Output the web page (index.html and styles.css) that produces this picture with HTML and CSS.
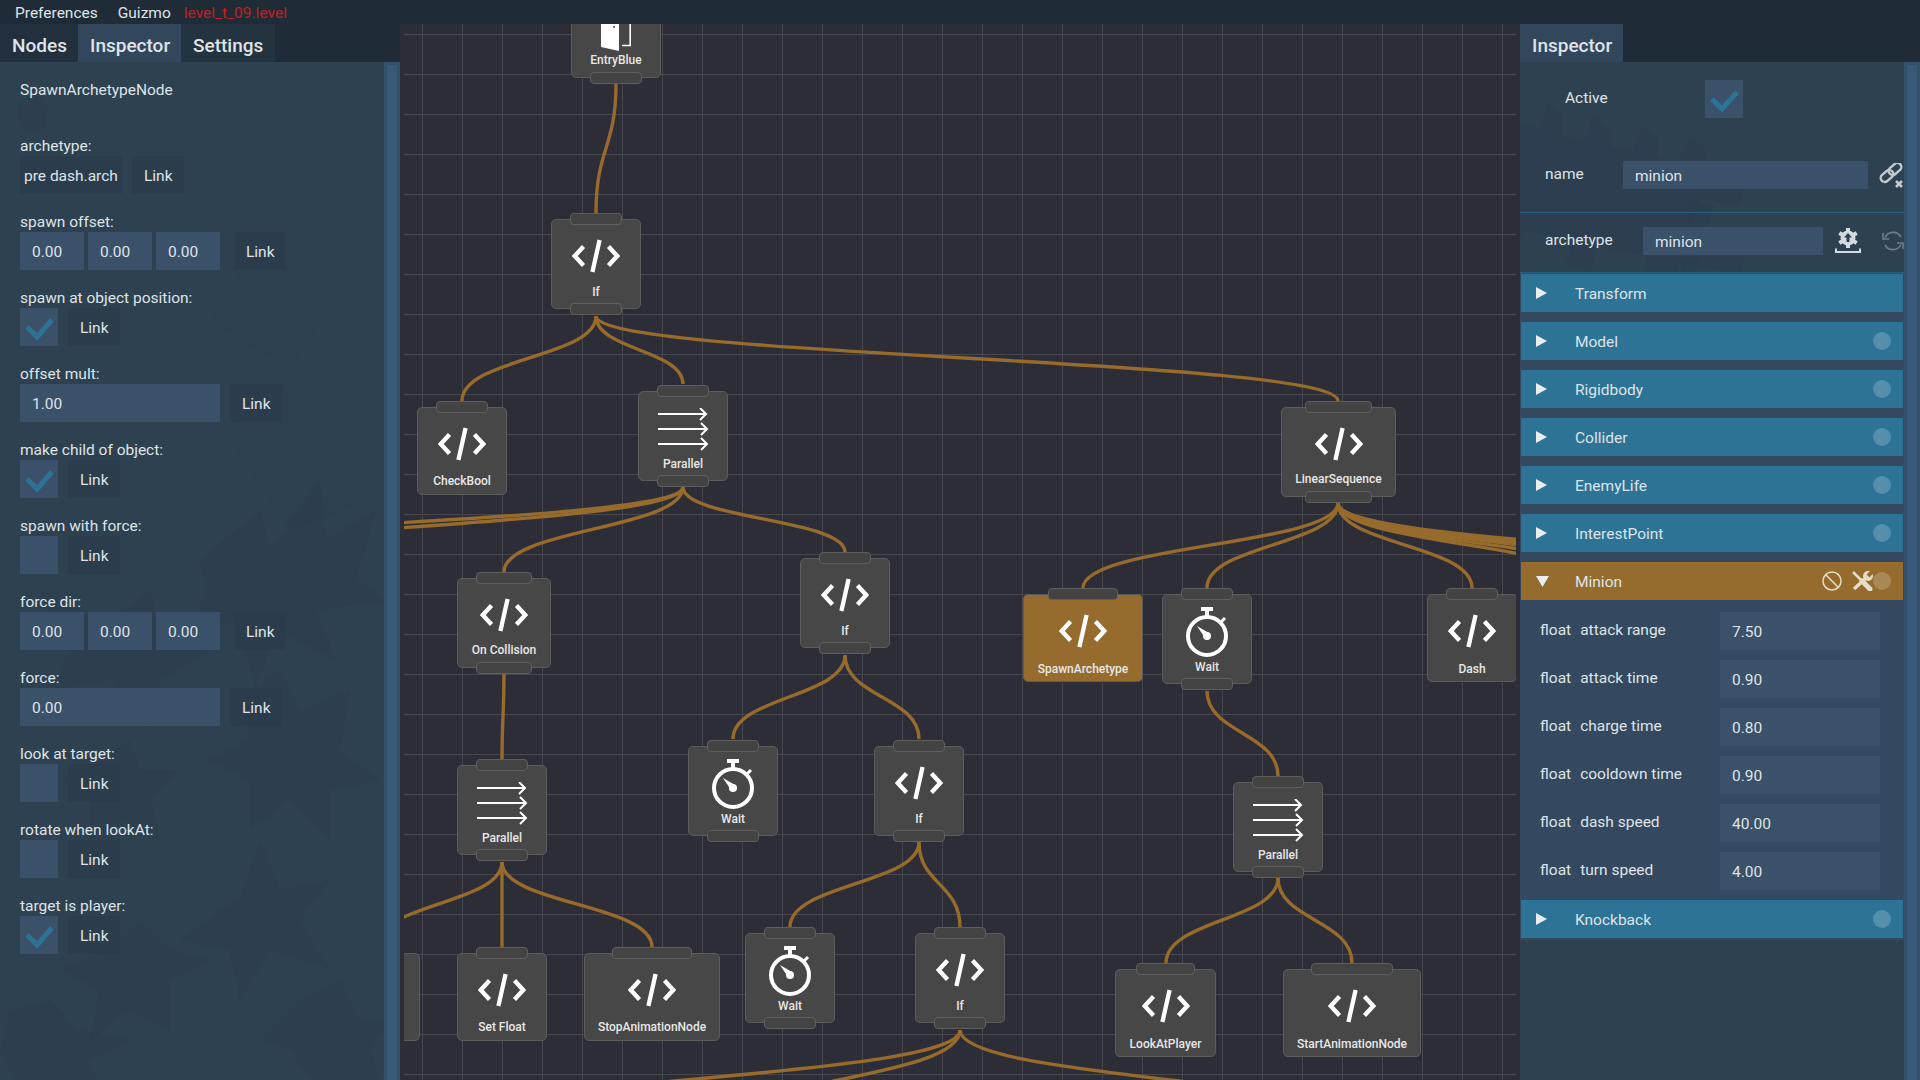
FILE: index.html
```html
<!DOCTYPE html>
<html lang="en">
<head>
  <meta charset="UTF-8">
  <title>Behaviour editor</title>
  <link rel="stylesheet" href="styles.css">
</head>
<body>
  <!-- shared node and checkbox icons -->
  <svg class="defs" width="0" height="0">
    <symbol id="ico-code" viewBox="0 0 48 34">
      <path d="M11.5 7.500 2.800 17l8.700 9.500M36.500 7.500l8.700 9.500-8.700 9.500M27.600 1l-7.200 32" fill="none" stroke="#fff" stroke-width="4.300"/>
    </symbol>
    <symbol id="ico-wait" viewBox="0 0 44 50">
      <path d="M16 0h12v4H16zM20 4h4v6h-4z" fill="#fff"/>
      <circle cx="22" cy="29" r="19" fill="none" stroke="#fff" stroke-width="4"/>
      <path d="M35 16l5-5" stroke="#fff" stroke-width="3"/>
      <path d="M12 19l12 7-4 5z" fill="#fff"/>
      <circle cx="22" cy="29" r="4" fill="#fff"/>
    </symbol>
    <symbol id="ico-parallel" viewBox="0 0 52 44">
      <path d="M1 6h48M43 0l6 6-6 6M1 21h49M44 15l6 6-6 6M1 36h49M44 30l6 6-6 6" fill="none" stroke="#fff" stroke-width="2"/>
    </symbol>
    <symbol id="ico-door" viewBox="0 0 30 38">
      <path d="M0 0h18v38L0 34z" fill="#fff"/>
      <circle cx="13" cy="14" r="1" fill="#444"/>
      <path d="M21 32.500h8.200V0" fill="none" stroke="#fff" stroke-width="1.600"/>
    </symbol>
    <symbol id="ico-check" viewBox="0 0 38 38">
      <path d="M7 19l10 10 15-17" fill="none" stroke="#2c7396" stroke-width="5"/>
    </symbol>
    <symbol id="ico-tri" viewBox="0 0 11 12">
      <path d="M0 0l11 6-11 6z" fill="#e8edf0"/>
    </symbol>
  </svg>

  <div class="menu-bar">
    <span class="menu-item">Preferences</span>
    <span class="menu-item">Guizmo</span>
    <span class="menu-file">level_t_09.level</span>
  </div>

  <div class="workspace">
    <!-- left dock -->
    <div class="dock">
      <div class="tabs">
        <div class="tab tab-nodes">Nodes</div>
        <div class="tab tab-active">Inspector</div>
        <div class="tab tab-settings">Settings</div>
      </div>
      <div class="dock-body">
        <svg class="texture" viewBox="0 62 400 1018" width="400" height="1018">
          <g fill="#2a3850" fill-opacity=".24">
            <path d="M20 100l22-6 6 14 -4 20-18 2-8-14z"/>
            <path d="M200 560l60-50 10 40 50-70 6 60 50-30-20 70 30 20-70 10 20 50-60-30-20 60-20-70-50 20 20-50z"/>
            <path d="M40 590l70 30 40-30 10 50 50 10-50 30-10 50-40-50-60 10 20-40z"/>
            <path d="M240 700l40-30 20 40 50-20-10 60 40 30-50 10 0 50-40-40-40 30 0-50-40-20 40-20z"/>
            <path d="M100 760l30-20 10 30 40 0-30 30 10 40-40-20-30 20 0-40-30-20z"/>
            <path d="M240 900l20-60 20 50 50-10-30 40 30 50-60-20-30 50-10-50-50-10 40-30z"/>
            <path d="M110 950l30-30 30 30 40 10-40 20 0 50-40-20-40 30 10-50-40-20z"/>
            <path d="M10 1010l40-10 30 30 50 10-40 20 10 30h-80l-20-40z"/>
            <path d="M300 1000l40-20 20 40 30 0-20 30 10 30h-70l-20-30-30-10z"/>
            <path d="M260 240l70 70-40 60-80-50z" fill-opacity=".1"/>
            <path d="M280 380l90 120-80 30-60-90z" fill-opacity=".1"/>
          </g>
        </svg>
        <div class="fields">
          <div class="node-title">SpawnArchetypeNode</div>

          <div class="field">
            <div class="field-label">archetype:</div>
            <div class="field-row">
              <span class="file-box">pre dash.arch</span>
              <span class="link-btn link-near">Link</span>
            </div>
          </div>

          <div class="field">
            <div class="field-label">spawn offset:</div>
            <div class="field-row">
              <span class="num-box">0.00</span><span class="num-box">0.00</span><span class="num-box">0.00</span>
              <span class="link-btn link-far">Link</span>
            </div>
          </div>

          <div class="field">
            <div class="field-label">spawn at object position:</div>
            <div class="field-row">
              <span class="check-box"><svg><use href="#ico-check"/></svg></span>
              <span class="link-btn link-near">Link</span>
            </div>
          </div>

          <div class="field">
            <div class="field-label">offset mult:</div>
            <div class="field-row">
              <span class="wide-box">1.00</span>
              <span class="link-btn link-near">Link</span>
            </div>
          </div>

          <div class="field">
            <div class="field-label">make child of object:</div>
            <div class="field-row">
              <span class="check-box"><svg><use href="#ico-check"/></svg></span>
              <span class="link-btn link-near">Link</span>
            </div>
          </div>

          <div class="field">
            <div class="field-label">spawn with force:</div>
            <div class="field-row">
              <span class="check-box"></span>
              <span class="link-btn link-near">Link</span>
            </div>
          </div>

          <div class="field">
            <div class="field-label">force dir:</div>
            <div class="field-row">
              <span class="num-box">0.00</span><span class="num-box">0.00</span><span class="num-box">0.00</span>
              <span class="link-btn link-far">Link</span>
            </div>
          </div>

          <div class="field">
            <div class="field-label">force:</div>
            <div class="field-row">
              <span class="wide-box">0.00</span>
              <span class="link-btn link-near">Link</span>
            </div>
          </div>

          <div class="field">
            <div class="field-label">look at target:</div>
            <div class="field-row">
              <span class="check-box"></span>
              <span class="link-btn link-near">Link</span>
            </div>
          </div>

          <div class="field">
            <div class="field-label">rotate when lookAt:</div>
            <div class="field-row">
              <span class="check-box"></span>
              <span class="link-btn link-near">Link</span>
            </div>
          </div>

          <div class="field">
            <div class="field-label">target is player:</div>
            <div class="field-row">
              <span class="check-box"><svg><use href="#ico-check"/></svg></span>
              <span class="link-btn link-near">Link</span>
            </div>
          </div>
        </div>
        <div class="scrollbar"><div class="scroll-thumb"></div></div>
      </div>
    </div>

    <!-- node graph -->
    <div class="graph">
      <div class="graph-inner">
        <svg class="wires" viewBox="404 24 1112 1056" width="1112" height="1056">
          <g fill="none" stroke="#966b2b" stroke-width="3.400">
            <path d="M616 84C616 148 596 148 596 213"/>
            <path d="M596 316C596 358 462 358 462 401"/>
            <path d="M596 316C596 350 683 350 683 384"/>
            <path d="M596 316C596 358 1338 358 1338 401"/>
            <path d="M683 487C683 529 504 529 504 572"/>
            <path d="M683 487C683 519 845 519 845 552"/>
            <path d="M683 487C683 529 -109 529 -109 572"/>
            <path d="M683 487C683 529 82 529 82 572"/>
            <path d="M504 674C504 716 502 716 502 759"/>
            <path d="M845 655C845 697 733 697 733 739"/>
            <path d="M845 655C845 697 919 697 919 739"/>
            <path d="M502 862C502 904 375 904 375 947"/>
            <path d="M502 862V947"/>
            <path d="M502 862C502 904 652 904 652 947"/>
            <path d="M919 842C919 884 790 884 790 927"/>
            <path d="M919 842C919 884 960 884 960 927"/>
            <path d="M960 1030C960 1080 412 1080 412 1130"/>
            <path d="M960 1030C960 1080 718 1080 718 1130"/>
            <path d="M960 1030C960 1080 1380 1080 1380 1130"/>
            <path d="M1338 503C1338 545 1083 545 1083 588"/>
            <path d="M1338 503C1338 545 1207 545 1207 588"/>
            <path d="M1338 503C1338 545 1472 545 1472 588"/>
            <path d="M1338 503C1338 545 1823 545 1823 588"/>
            <path d="M1338 503C1338 545 1760 545 1760 588"/>
            <path d="M1338 503C1338 545 1704 545 1704 588"/>
            <path d="M1338 503C1338 545 1647 545 1647 588"/>
            <path d="M1338 503C1338 545 1600 545 1600 588"/>
            <path d="M1207 691C1207 733 1278 733 1278 776"/>
            <path d="M1278 878C1278 920 1166 920 1166 963"/>
            <path d="M1278 878C1278 920 1352 920 1352 963"/>
          </g>
        </svg>

        <div class="node n-entry">
          <svg class="ico-door"><use href="#ico-door"/></svg>
          <div class="node-name name-door">EntryBlue</div>
          <div class="pin pin-out"></div>
        </div>
        <div class="node n-if-a">
          <div class="pin pin-in"></div>
          <svg class="ico-code"><use href="#ico-code"/></svg>
          <div class="node-name name-if">If</div>
          <div class="pin pin-out"></div>
        </div>
        <div class="node leaf n-checkbool">
          <div class="pin pin-in"></div>
          <svg class="ico-code"><use href="#ico-code"/></svg>
          <div class="node-name">CheckBool</div>
        </div>
        <div class="node n-parallel-a">
          <div class="pin pin-in"></div>
          <svg class="ico-parallel"><use href="#ico-parallel"/></svg>
          <div class="node-name name-parallel">Parallel</div>
          <div class="pin pin-out"></div>
        </div>
        <div class="node n-linear">
          <div class="pin pin-in"></div>
          <svg class="ico-code"><use href="#ico-code"/></svg>
          <div class="node-name">LinearSequence</div>
          <div class="pin pin-out"></div>
        </div>
        <div class="node n-collision">
          <div class="pin pin-in"></div>
          <svg class="ico-code"><use href="#ico-code"/></svg>
          <div class="node-name">On Collision</div>
          <div class="pin pin-out"></div>
        </div>
        <div class="node n-if-b">
          <div class="pin pin-in"></div>
          <svg class="ico-code"><use href="#ico-code"/></svg>
          <div class="node-name name-if">If</div>
          <div class="pin pin-out"></div>
        </div>
        <div class="node leaf selected n-spawn">
          <div class="pin pin-in"></div>
          <svg class="ico-code"><use href="#ico-code"/></svg>
          <div class="node-name">SpawnArchetype</div>
        </div>
        <div class="node n-wait-a">
          <div class="pin pin-in"></div>
          <svg class="ico-wait"><use href="#ico-wait"/></svg>
          <div class="node-name name-wait">Wait</div>
          <div class="pin pin-out"></div>
        </div>
        <div class="node leaf n-dash">
          <div class="pin pin-in"></div>
          <svg class="ico-code"><use href="#ico-code"/></svg>
          <div class="node-name">Dash</div>
        </div>
        <div class="node n-parallel-b">
          <div class="pin pin-in"></div>
          <svg class="ico-parallel"><use href="#ico-parallel"/></svg>
          <div class="node-name name-parallel">Parallel</div>
          <div class="pin pin-out"></div>
        </div>
        <div class="node n-wait-b">
          <div class="pin pin-in"></div>
          <svg class="ico-wait"><use href="#ico-wait"/></svg>
          <div class="node-name name-wait">Wait</div>
          <div class="pin pin-out"></div>
        </div>
        <div class="node n-if-c">
          <div class="pin pin-in"></div>
          <svg class="ico-code"><use href="#ico-code"/></svg>
          <div class="node-name name-if">If</div>
          <div class="pin pin-out"></div>
        </div>
        <div class="node n-parallel-c">
          <div class="pin pin-in"></div>
          <svg class="ico-parallel"><use href="#ico-parallel"/></svg>
          <div class="node-name name-parallel">Parallel</div>
          <div class="pin pin-out"></div>
        </div>
        <div class="node leaf n-stub">
          <div class="pin pin-in"></div>
        </div>
        <div class="node leaf n-setfloat">
          <div class="pin pin-in"></div>
          <svg class="ico-code"><use href="#ico-code"/></svg>
          <div class="node-name">Set Float</div>
        </div>
        <div class="node leaf n-stop">
          <div class="pin pin-in"></div>
          <svg class="ico-code"><use href="#ico-code"/></svg>
          <div class="node-name">StopAnimationNode</div>
        </div>
        <div class="node n-wait-c">
          <div class="pin pin-in"></div>
          <svg class="ico-wait"><use href="#ico-wait"/></svg>
          <div class="node-name name-wait">Wait</div>
          <div class="pin pin-out"></div>
        </div>
        <div class="node n-if-d">
          <div class="pin pin-in"></div>
          <svg class="ico-code"><use href="#ico-code"/></svg>
          <div class="node-name name-if">If</div>
          <div class="pin pin-out"></div>
        </div>
        <div class="node leaf n-lookat">
          <div class="pin pin-in"></div>
          <svg class="ico-code"><use href="#ico-code"/></svg>
          <div class="node-name">LookAtPlayer</div>
        </div>
        <div class="node leaf n-startanim">
          <div class="pin pin-in"></div>
          <svg class="ico-code"><use href="#ico-code"/></svg>
          <div class="node-name">StartAnimationNode</div>
        </div>
      </div>
    </div>

    <!-- right dock -->
    <div class="dock">
      <div class="tabs">
        <div class="tab tab-active">Inspector</div>
      </div>
      <div class="dock-body">
        <svg class="texture" viewBox="1520 62 400 1018" width="400" height="1018">
          <g fill="#2a3a50" fill-opacity=".4">
            <path d="M1520 122l20 6 8-24 14 12 0 20 22 4 10-24 18 12 0 20 20 4 10-26 16 14 0 18 20 4 12-26 16 14 0 22 40 8-6 26-40-8-14 40 60 12-6 24-60-12-12 30-30-8 10-28-50-10-8 26-24-8 8-24-50-10-6 22-20-6z"/>
            <path d="M1690 200l24 6-40 140 60 12-30 100-26-8 20-70-30-8z" fill-opacity=".22"/>
          </g>
        </svg>
        <div class="props">
          <div class="active-row">
            <span class="active-label">Active</span>
            <span class="check-box"><svg><use href="#ico-check"/></svg></span>
          </div>
          <div class="name-row">
            <span class="prop-label label-name">name</span>
            <span class="text-box box-name">minion</span>
            <svg class="ico-unlink" viewBox="0 0 25 25" width="25" height="25">
              <g fill="none" stroke="#c2c9cf" stroke-width="2.400">
                <rect x="9" y="2" width="14" height="8" rx="4" transform="rotate(-40 16 6)"/>
                <rect x="1" y="9" width="14" height="8" rx="4" transform="rotate(-40 8 13)"/>
              </g>
              <path d="M17 18l6 6m0-6l-6 6" stroke="#c2c9cf" stroke-width="2.600"/>
            </svg>
          </div>
          <div class="arch-row">
            <span class="prop-label label-arch">archetype</span>
            <span class="text-box box-arch">minion</span>
            <svg class="ico-gear" viewBox="0 0 26 26" width="26" height="26">
              <circle cx="13" cy="10" r="7.500" fill="#d5dade"/>
              <path d="M13 10V0M13 10l8.700-5M13 10l8.700 5M13 10v10M13 10l-8.700 5M13 10L4.300 5" stroke="#d5dade" stroke-width="4"/>
              <path d="M13 5l-4 4.500h2.500V14h3V9.500H17z" fill="#2f4354"/>
              <path d="M1 20.500v3.500h24v-3.500" fill="none" stroke="#d5dade" stroke-width="2"/>
            </svg>
            <svg class="ico-sync" viewBox="0 0 22 22" width="22" height="22">
              <path d="M3 7.500A9 9 0 0 1 19 7M19 14.500A9 9 0 0 1 3 15" fill="none" stroke="#6d7d8b" stroke-width="1.600"/>
              <path d="M1 3v6h6M21 19v-6h-6" fill="none" stroke="#6d7d8b" stroke-width="1.600"/>
            </svg>
          </div>

          <div class="comp-list">
            <div class="comp-head no-dot">
              <svg class="tri"><use href="#ico-tri"/></svg><span class="comp-name">Transform</span>
            </div>
            <div class="comp-head">
              <svg class="tri"><use href="#ico-tri"/></svg><span class="comp-name">Model</span><span class="dot"></span>
            </div>
            <div class="comp-head">
              <svg class="tri"><use href="#ico-tri"/></svg><span class="comp-name">Rigidbody</span><span class="dot"></span>
            </div>
            <div class="comp-head">
              <svg class="tri"><use href="#ico-tri"/></svg><span class="comp-name">Collider</span><span class="dot"></span>
            </div>
            <div class="comp-head">
              <svg class="tri"><use href="#ico-tri"/></svg><span class="comp-name">EnemyLife</span><span class="dot"></span>
            </div>
            <div class="comp-head">
              <svg class="tri"><use href="#ico-tri"/></svg><span class="comp-name">InterestPoint</span><span class="dot"></span>
            </div>
            <div class="comp-head comp-open">
              <svg class="tri-down" viewBox="0 0 13 11" width="13" height="11"><path d="M0 0h13L6.500 11z" fill="#e8edf0"/></svg>
              <span class="comp-name">Minion</span>
              <svg class="ico-ban" viewBox="0 0 20 20" width="20" height="20">
                <circle cx="10" cy="10" r="9" fill="none" stroke="#e6dcc8" stroke-width="1.500"/>
                <path d="M4 4l12 12" stroke="#e6dcc8" stroke-width="1.500"/>
              </svg>
              <svg class="ico-tools" viewBox="0 0 21 20" width="21" height="20">
                <path d="M1 1l8 8" stroke="#e6dcc8" stroke-width="2.500"/>
                <path d="M10 10l8 8" stroke="#e6dcc8" stroke-width="5" stroke-linecap="round"/>
                <path d="M2 18L13 8" stroke="#e6dcc8" stroke-width="3.500"/>
                <circle cx="16" cy="5" r="5" fill="#e6dcc8"/>
                <path d="M16 5l5-5" stroke="#956c2e" stroke-width="4"/>
              </svg>
              <span class="dot"></span>
            </div>
            <div class="comp-body">
              <div class="float-row">
                <span class="float-label"><span class="float-type">float</span>attack range</span>
                <span class="float-box">7.50</span>
              </div>
              <div class="float-row">
                <span class="float-label"><span class="float-type">float</span>attack time</span>
                <span class="float-box">0.90</span>
              </div>
              <div class="float-row">
                <span class="float-label"><span class="float-type">float</span>charge time</span>
                <span class="float-box">0.80</span>
              </div>
              <div class="float-row">
                <span class="float-label"><span class="float-type">float</span>cooldown time</span>
                <span class="float-box">0.90</span>
              </div>
              <div class="float-row">
                <span class="float-label"><span class="float-type">float</span>dash speed</span>
                <span class="float-box">40.00</span>
              </div>
              <div class="float-row">
                <span class="float-label"><span class="float-type">float</span>turn speed</span>
                <span class="float-box">4.00</span>
              </div>
            </div>
            <div class="comp-head">
              <svg class="tri"><use href="#ico-tri"/></svg><span class="comp-name">Knockback</span><span class="dot"></span>
            </div>
          </div>
        </div>
        <div class="scrollbar"><div class="scroll-thumb"></div></div>
      </div>
    </div>
  </div>
</body>
</html>
```

FILE: styles.css
```css
/* General layout */
html, body {
  margin: 0;
  padding: 0;
  height: 100%;
  overflow: hidden;
}

body {
  display: flex;
  flex-direction: column;
  width: 1920px;
  height: 1080px;
  font-family: Roboto, "Liberation Sans", sans-serif;
  font-size: 15.5px;
  color: #dfe4e8;
  background-color: #1f2c38;
}

.defs {
  position: absolute;
}

.menu-bar {
  display: flex;
  align-items: center;
  height: 24px;
  box-sizing: border-box;
  padding: 2px 0 0 15px;
  background-color: #1f2c38;
}

.menu-item {
  margin-right: 20px;
}

.menu-file {
  margin-left: -7px;
  color: #c41e1e;
}

.workspace {
  display: flex;
  flex: 1;
  min-height: 0;
}

/* Docks */
.dock {
  display: flex;
  flex-direction: column;
  width: 400px;
}

.tabs {
  display: flex;
  height: 38px;
  background-color: #1f2c38;
}

.tab {
  display: flex;
  align-items: center;
  box-sizing: border-box;
  padding: 4px 12px 0;
  font-size: 19px;
  font-weight: 500;
}

.tab-nodes {
  width: 78px;
  background-color: #22303e;
}

.tab-active {
  width: 103px;
  background-color: #33475c;
}

.tab-settings {
  width: 94px;
  background-color: #243340;
}

.dock-body {
  position: relative;
  flex: 1;
  display: flex;
  background-color: #2e4150;
  overflow: hidden;
}

.texture {
  position: absolute;
  left: 0;
  top: 0;
}

.scrollbar {
  position: absolute;
  right: 0;
  top: 0;
  bottom: 0;
  width: 16px;
  box-sizing: border-box;
  padding: 3px 3px 0;
  background-color: #33506a;
}

.scroll-thumb {
  height: 100%;
  background-color: #385a78;
}

/* Left inspector fields */
.fields {
  position: relative;
  padding: 16px 20px 0;
}

.node-title {
  height: 24px;
  line-height: 24px;
  margin-bottom: 30px;
}

.field {
  height: 76px;
}

.field-label {
  height: 24px;
  line-height: 28px;
}

.field-row {
  display: flex;
  height: 38px;
}

.file-box, .num-box, .wide-box, .link-btn {
  display: flex;
  align-items: center;
  box-sizing: border-box;
  padding-top: 1px;
}

.file-box {
  width: 102px;
  padding-left: 4px;
  background-color: #2b3d4d;
}

.num-box {
  width: 64px;
  margin-right: 4px;
  padding-left: 12px;
  background-color: #3b5069;
}

.wide-box {
  width: 200px;
  padding-left: 12px;
  background-color: #3b5069;
}

.link-btn {
  width: 52px;
  padding-left: 12px;
  background-color: #2b3d4d;
}

.link-near {
  margin-left: 10px;
}

.link-far {
  margin-left: 10px;
}

.check-box {
  display: block;
  width: 38px;
  height: 38px;
  background-color: #3b5069;
}

.check-box svg {
  display: block;
  width: 38px;
  height: 38px;
}

/* Graph canvas */
.graph {
  flex: 1;
  padding: 0 4px;
  background-color: #2d2d38;
}

.graph-inner {
  position: relative;
  height: 100%;
  overflow: hidden;
  background-color: #2d2d38;
  background-image:
    linear-gradient(to right, #474750 1px, transparent 1px),
    linear-gradient(to bottom, #474750 1px, transparent 1px);
  background-size: 40px 40px;
  background-position: 18px 10px;
}

.wires {
  position: absolute;
  left: 0;
  top: 0;
}

.node {
  position: absolute;
  display: flex;
  flex-direction: column;
  align-items: center;
  box-sizing: border-box;
  width: 90px;
  height: 90px;
  padding-top: 19px;
  background-color: #474747;
  border: 1px solid #5c5c5c;
  border-radius: 5px;
}

.node.leaf {
  height: 88px;
}

.node.selected {
  background-color: #956c2e;
}

.pin {
  position: absolute;
  left: 20%;
  width: 60%;
  height: 12px;
  box-sizing: border-box;
  background-color: #434343;
  border: 1px solid #5f5f5f;
  border-radius: 4px;
}

.pin-in {
  top: -7px;
}

.pin-out {
  bottom: -7px;
}

.ico-code {
  display: block;
  width: 48px;
  height: 34px;
  flex: none;
}

.ico-wait {
  display: block;
  width: 44px;
  height: 50px;
  margin-top: -7px;
  flex: none;
}

.ico-parallel {
  display: block;
  width: 52px;
  height: 44px;
  margin-top: -3px;
  flex: none;
}

.ico-door {
  display: block;
  width: 30px;
  height: 38px;
  margin-top: 5px;
  flex: none;
}

.node-name {
  margin-top: 10px;
  font-size: 12px;
  font-weight: 500;
  line-height: 16px;
  white-space: nowrap;
  color: #e8e8e8;
}

.name-if {
  margin-top: 10.5px;
}

.leaf .node-name {
  margin-top: 12px;
}

.n-spawn .node-name, .n-dash .node-name, .n-lookat .node-name, .n-startanim .node-name {
  margin-top: 12.5px;
}

.name-wait {
  margin-top: 1.5px;
}

.name-parallel {
  margin-top: 4px;
}

.name-door {
  margin-top: 1px;
}

/* Node positions on the canvas */
.n-entry { left: 167px; top: -36px; }
.n-if-a { left: 147px; top: 195px; }
.n-checkbool { left: 13px; top: 383px; }
.n-parallel-a { left: 234px; top: 367px; }
.n-linear { left: 877px; top: 383px; width: 115px; }
.n-collision { left: 53px; top: 554px; width: 94px; }
.n-if-b { left: 396px; top: 534px; }
.n-spawn { left: 619px; top: 570px; width: 120px; }
.n-wait-a { left: 758px; top: 570px; }
.n-dash { left: 1023px; top: 570px; }
.n-parallel-b { left: 53px; top: 741px; }
.n-wait-b { left: 284px; top: 722px; }
.n-if-c { left: 470px; top: 722px; }
.n-parallel-c { left: 829px; top: 758px; }
.n-stub { left: -74px; top: 929px; }
.n-setfloat { left: 53px; top: 929px; }
.n-stop { left: 180px; top: 929px; width: 136px; }
.n-wait-c { left: 341px; top: 909px; }
.n-if-d { left: 511px; top: 909px; }
.n-lookat { left: 711px; top: 945px; width: 101px; }
.n-startanim { left: 879px; top: 945px; width: 138px; }

/* Right inspector */
.props {
  position: relative;
  width: 384px;
}

.active-row {
  display: flex;
  align-items: center;
  height: 38px;
  margin-top: 18px;
  padding-left: 45px;
}

.active-label {
  width: 140px;
  margin-top: -3px;
}

.name-row, .arch-row {
  display: flex;
  align-items: center;
  height: 28px;
  padding-left: 25px;
}

.name-row {
  margin-top: 43px;
}

.arch-row {
  position: relative;
  margin-top: 38px;
}

.arch-row::before {
  content: "";
  position: absolute;
  left: 0;
  right: 0;
  top: -15px;
  height: 1px;
  background-color: #2a6080;
}

.prop-label {
  margin-top: -3px;
}

.label-name {
  width: 78px;
}

.label-arch {
  width: 98px;
}

.text-box {
  display: flex;
  align-items: center;
  height: 28px;
  box-sizing: border-box;
  padding: 1px 0 0 12px;
  background-color: #3b5069;
}

.box-name {
  width: 245px;
}

.box-arch {
  width: 180px;
}

.ico-unlink {
  margin-left: 11px;
  flex: none;
}

.ico-gear {
  margin-left: 12px;
  flex: none;
}

.ico-sync {
  margin-left: 21px;
  flex: none;
}

.comp-list {
  display: flex;
  flex-direction: column;
  margin-top: 17px;
  padding: 1px 1px 2px;
  background-color: #34495f;
  border-top: 1px solid #2a6080;
}

.comp-head {
  display: flex;
  align-items: center;
  height: 38px;
  margin-bottom: 10px;
  padding: 0 12px 0 15px;
  background-color: #2c7396;
}

.comp-head:last-child {
  margin-bottom: 0;
}

.tri {
  display: block;
  width: 11px;
  height: 12px;
  flex: none;
}

.tri-down {
  flex: none;
}

.comp-name {
  flex: 1;
  margin-left: 28px;
  padding-top: 1px;
}

.comp-open {
  margin-bottom: 0;
  background-color: #956c2e;
}

.comp-open .comp-name {
  margin-left: 26px;
}

.dot {
  width: 18px;
  height: 18px;
  border-radius: 50%;
  background-color: rgba(255, 255, 255, .2);
  flex: none;
}

.ico-ban {
  margin-right: 10px;
  flex: none;
}

.ico-tools {
  flex: none;
}

.comp-body {
  display: flex;
  flex-direction: column;
  gap: 10px;
  padding: 12px 0 10px 19px;
}

.float-row {
  display: flex;
  align-items: center;
  height: 38px;
}

.float-label {
  width: 180px;
  margin-top: -3px;
}

.float-type {
  margin-right: 9px;
}

.float-box {
  display: flex;
  align-items: center;
  width: 160px;
  height: 38px;
  box-sizing: border-box;
  padding: 1px 0 0 12px;
  background-color: #3b5069;
}
```
